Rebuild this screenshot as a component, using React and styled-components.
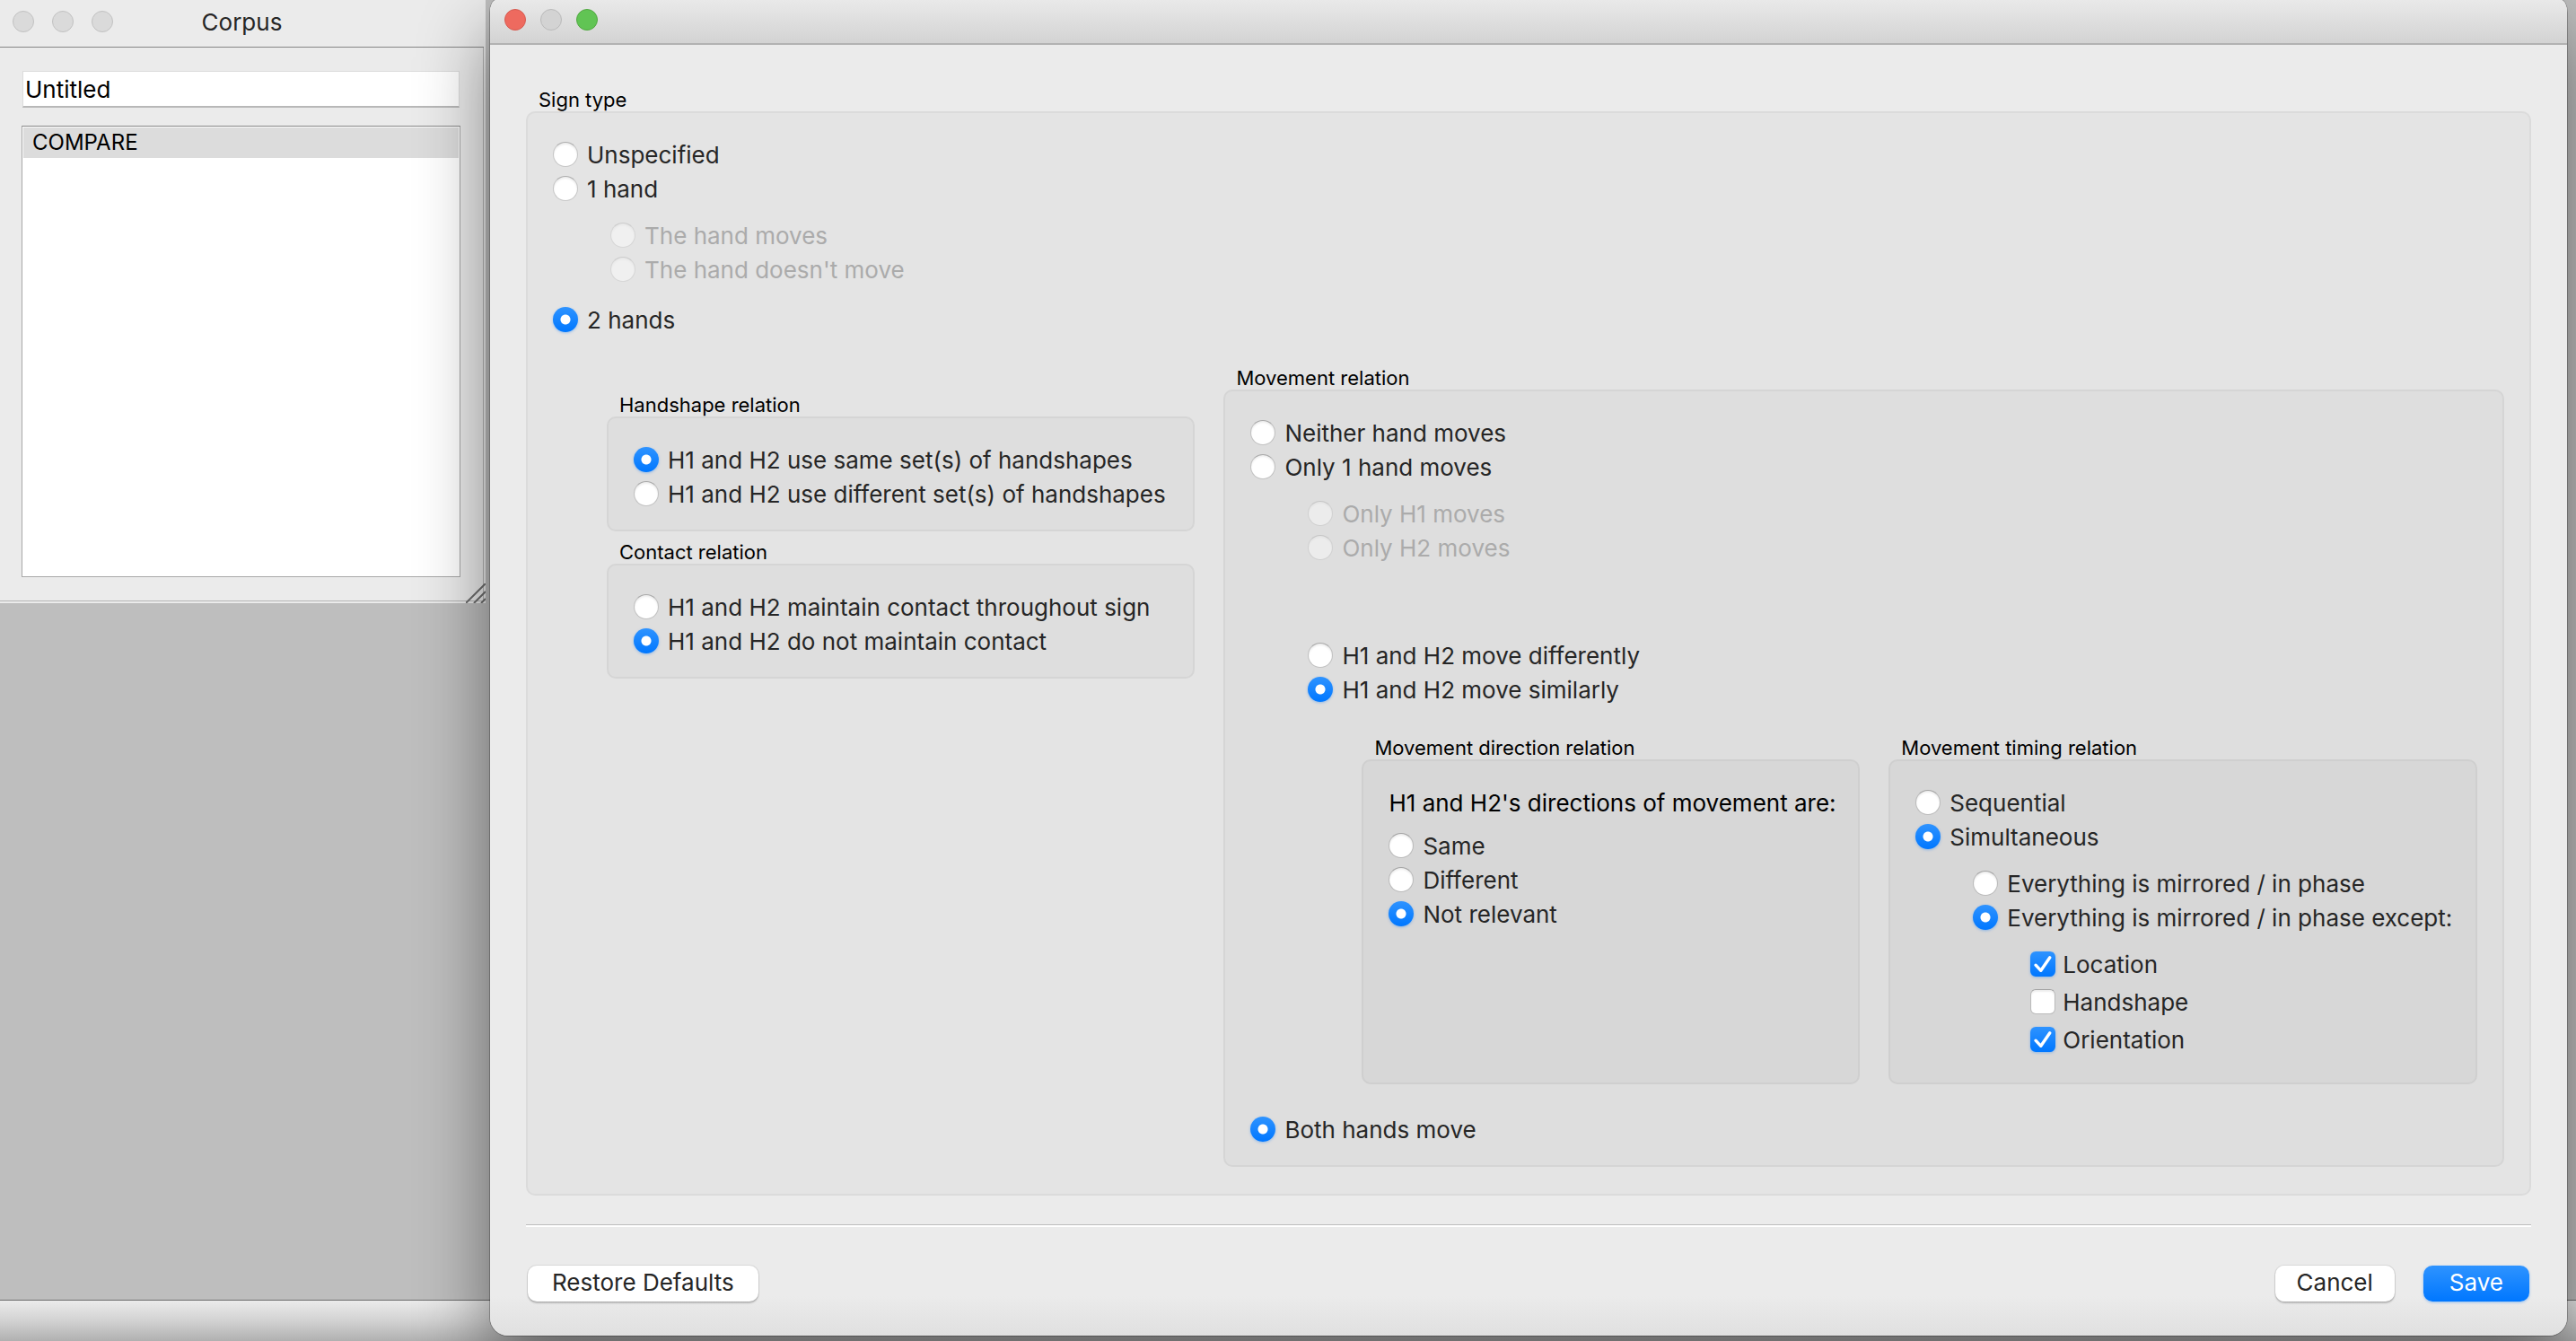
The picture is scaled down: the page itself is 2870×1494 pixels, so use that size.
import React, { useState } from "react";
import styled, { createGlobalStyle, css } from "styled-components";

const GlobalStyle = createGlobalStyle`
  *, *::before, *::after { box-sizing: border-box; }
  body {
    margin: 0;
    background: #bebebe;
    color: #262626;
    font-family: Inter, "Liberation Sans", sans-serif;
    font-size: 26px;
    line-height: 38px;
  }
  button, input { font: inherit; color: inherit; }
`;

const Desktop = styled.main`
  display: grid;
  grid-template-columns: 546px minmax(0, 1fr);
  min-height: 100vh;
  overflow: hidden;
`;

const MainWindow = styled.div`
  grid-area: 1 / 1 / 2 / 3;
  display: flex;
  flex-direction: column;
`;

const Workspace = styled.div`
  flex: 1;
  background: #bebebe;
`;

const StatusBar = styled.div`
  height: 46px;
  border-top: 1px solid #6c6c6c;
  background: linear-gradient(#ebebeb, #d2d2d2 50%, #b0b0b0);
`;

/* Corpus window */

const CorpusWindow = styled.section`
  grid-area: 1 / 1 / 2 / 2;
  position: relative;
  align-self: start;
  margin-right: 5px;
  padding: 0 2px 2px 0;
  background: #ebebeb;
`;

const CorpusTitleBar = styled.header`
  display: grid;
  grid-template-columns: 1fr auto 1fr;
  align-items: center;
  height: 53px;
  padding: 0 14px 4px;
  border-bottom: 1px solid #868686;
`;

const CorpusTitle = styled.h1`
  margin: 0;
  padding-top: 2px;
  font-size: 26px;
  font-weight: 400;
  line-height: 46px;
`;

const Lights = styled.div`
  display: flex;
  gap: ${(p) => p.$gap}px;
`;

const lightTones = {
  idle: ["#dadada", "#c2c2c2"],
  dim: ["#d3d3d3", "#bababa"],
  red: ["#ee6a5f", "#d65a50"],
  green: ["#61c454", "#52a842"],
};

const Light = styled.button`
  width: 24px;
  height: 24px;
  padding: 0;
  border: 1px solid ${(p) => lightTones[p.$tone][1]};
  border-radius: 50%;
  background: ${(p) => lightTones[p.$tone][0]};
`;

const CorpusBody = styled.div`
  display: flex;
  flex-direction: column;
  gap: 20px;
  padding: 26px 25px 26px 24px;
  border-right: 1px solid #b4b4b4;
  border-bottom: 1px solid #b4b4b4;
`;

const NameInput = styled.input`
  height: 41px;
  margin: 0 1px;
  padding: 0 2px;
  border: 1px solid #dcdcdc;
  border-bottom: 2px solid #b8b8b8;
  border-radius: 0;
  outline: none;
  background: #fff;
  color: #000;
`;

const GlossList = styled.ul`
  min-height: 503px;
  margin: 0;
  padding: 1px;
  list-style: none;
  border: 1px solid #a8a8a8;
  border-top-color: #868686;
  background: #fff;
`;

const GlossButton = styled.button`
  display: block;
  width: 100%;
  height: 34px;
  padding: 0 10px;
  border: 0;
  background: #dcdcdc;
  color: #000;
  font-size: 24px;
  line-height: 34px;
  text-align: left;
`;

const Grip = styled.svg`
  position: absolute;
  right: 0;
  bottom: 0;
  width: 22px;
  height: 22px;
`;

/* Dialog */

const Dialog = styled.section`
  grid-area: 1 / 2 / 2 / 3;
  position: relative;
  align-self: start;
  margin-right: 10px;
  border-radius: 7px 7px 20px 20px / 14px 14px 20px 20px;
  background: linear-gradient(to top, #e0e0e0, #ebebeb 44px);
  box-shadow:
    0 0 0 1px rgba(0, 0, 0, 0.25),
    0 36px 80px rgba(0, 0, 0, 0.47);
`;

const DialogTitleBar = styled.header`
  height: 50px;
  padding: 10px 16px;
  border-bottom: 2px solid #b2b2b2;
  border-radius: inherit;
  border-bottom-left-radius: 0;
  border-bottom-right-radius: 0;
  background: linear-gradient(#e9e9e9, #d3d3d3);
`;

const DialogBody = styled.form`
  padding: 44px 40px 38px;
`;

const Group = styled.fieldset`
  display: flex;
  flex-direction: column;
  min-width: 0;
  margin: 0;
  padding: 0;
  border: 0;
`;

const Legend = styled.legend`
  padding: 5px 14px 1px;
  color: #000;
  font-size: 22px;
  line-height: 24px;
  white-space: nowrap;
`;

const panelTones = [
  ["#e4e4e4", "#dbdbdb"],
  ["#dedede", "#d5d5d5"],
  ["#d7d7d7", "#cfcfcf"],
];

const Panel = styled.div`
  flex: 1;
  padding: 27px 28px 21px;
  border: 2px solid ${(p) => panelTones[p.$level][1]};
  border-radius: 10px;
  background: ${(p) => panelTones[p.$level][0]};
`;

const Sub = styled.div`
  margin-left: 64px;
  padding: ${(p) => p.$top || 14}px 0 4px;
`;

const Choices = styled.div`
  padding-top: ${(p) => p.$top || 0}px;
`;

const Columns = styled.div`
  display: grid;
  grid-template-columns: ${(p) => p.$template};
  gap: 32px;
  margin-left: 60px;
  padding: 29px 0 9px;
`;

const Stack = styled.div`
  display: flex;
  flex-direction: column;
  gap: 6px;
  padding-top: 30px;
`;

const Prompt = styled.p`
  margin: 0;
  padding: 1px 0 9px;
  color: #000;
  white-space: nowrap;
`;

const Option = styled.label`
  display: flex;
  align-items: center;
  gap: 10px;
  height: 38px;
  white-space: nowrap;
  color: ${(p) => (p.$disabled ? "#ababab" : "inherit")};
`;

const OptionText = styled.span`
  padding-top: 2px;
`;

const CheckOption = styled(Option)`
  gap: 8px;
  & + & { margin-top: 4px; }
`;

const checkable = css`
  appearance: none;
  flex: none;
  width: 28px;
  height: 28px;
  margin: 0;
  border: 1px solid rgba(0, 0, 0, 0.13);
  border-top-color: rgba(0, 0, 0, 0.24);
  background: #fff;
  background-clip: padding-box;
  box-shadow: inset 0 2px 2px rgba(0, 0, 0, 0.07);
`;

const RadioInput = styled.input.attrs({ type: "radio" })`
  ${checkable}
  border-radius: 50%;
  &:checked {
    border: 0;
    background:
      radial-gradient(circle, #fff 5px, rgba(255, 255, 255, 0) 6px),
      linear-gradient(#2e93ff, #0077ff);
    box-shadow: 0 1px 3px rgba(0, 120, 255, 0.35);
  }
  &:disabled { opacity: 0.45; }
`;

const CheckFrame = styled.span`
  display: grid;
  & > * { grid-area: 1 / 1; }
`;

const CheckInput = styled.input.attrs({ type: "checkbox" })`
  ${checkable}
  border-radius: 6px;
  &:checked {
    border: 0;
    background: linear-gradient(#2e93ff, #0077ff);
    box-shadow: 0 1px 3px rgba(0, 120, 255, 0.35);
  }
`;

const CheckMark = styled.svg`
  width: 28px;
  height: 28px;
  pointer-events: none;
`;

const Divider = styled.hr`
  height: 3px;
  margin: 32px 0 43px;
  border: 0;
  border-top: 1px solid #bdbdbd;
  background: #fff;
`;

const Footer = styled.footer`
  display: flex;
  gap: 32px;
  padding: 0 2px;
`;

const Spacer = styled.div`
  flex: 1;
`;

const PushButton = styled.button`
  height: 40px;
  padding: 0 ${(p) => p.$pad}px 2px;
  border: 0;
  border-radius: 10px;
  background: ${(p) => (p.$primary ? "linear-gradient(#2e93ff, #0077ff)" : "#fff")};
  color: ${(p) => (p.$primary ? "#fff" : "#262626")};
  line-height: 38px;
  box-shadow: ${(p) =>
    p.$primary
      ? "0 1px 3px rgba(0, 120, 255, 0.4)"
      : "0 0 0 1px rgba(0, 0, 0, 0.08), 0 2px 2px rgba(0, 0, 0, 0.2)"};
`;

function Radio({ group, label, disabled, value, onPick }) {
  return (
    <Option $disabled={disabled}>
      <RadioInput
        name={group}
        disabled={disabled}
        checked={value === label}
        onChange={() => onPick(group, label)}
      />
      <OptionText>{label}</OptionText>
    </Option>
  );
}

function Check({ label, initial }) {
  const [on, setOn] = useState(initial);
  return (
    <CheckOption>
      <CheckFrame>
        <CheckInput checked={on} onChange={() => setOn(!on)} />
        {on && (
          <CheckMark viewBox="0 0 28 28" aria-hidden="true">
            <path
              d="M6 15.2 L11.8 21.3 L21.8 6.8"
              fill="none"
              stroke="#fff"
              strokeWidth="3.4"
              strokeLinecap="round"
              strokeLinejoin="round"
            />
          </CheckMark>
        )}
      </CheckFrame>
      <OptionText>{label}</OptionText>
    </CheckOption>
  );
}

export default function App() {
  const [name, setName] = useState("Untitled");
  const [picks, setPicks] = useState({
    hands: "2 hands",
    handshape: "H1 and H2 use same set(s) of handshapes",
    contact: "H1 and H2 do not maintain contact",
    movement: "Both hands move",
    both: "H1 and H2 move similarly",
    direction: "Not relevant",
    timing: "Simultaneous",
    phase: "Everything is mirrored / in phase except:",
  });
  const pick = (group, label) => setPicks((all) => ({ ...all, [group]: label }));
  const radio = (group, label, disabled) => (
    <Radio group={group} label={label} disabled={disabled} value={picks[group]} onPick={pick} />
  );
  const oneHand = picks.hands === "1 hand";
  const onlyOne = picks.movement === "Only 1 hand moves";

  return (
    <>
      <GlobalStyle />
      <Desktop>
        <MainWindow>
          <Workspace />
          <StatusBar />
        </MainWindow>

        <CorpusWindow>
          <CorpusTitleBar>
            <Lights $gap={20}>
              <Light $tone="idle" aria-label="Close" />
              <Light $tone="idle" aria-label="Minimize" />
              <Light $tone="idle" aria-label="Zoom" />
            </Lights>
            <CorpusTitle>Corpus</CorpusTitle>
          </CorpusTitleBar>
          <CorpusBody>
            <NameInput
              aria-label="Corpus name"
              value={name}
              onChange={(e) => setName(e.target.value)}
            />
            <GlossList>
              <li>
                <GlossButton>COMPARE</GlossButton>
              </li>
            </GlossList>
          </CorpusBody>
          <Grip viewBox="0 0 22 22" aria-hidden="true">
            <path d="M0 22 L22 0 M9 22 L22 9 M17 22 L22 17" stroke="#6e6e6e" strokeWidth="2" />
          </Grip>
        </CorpusWindow>

        <Dialog role="dialog" aria-label="Sign type">
          <DialogTitleBar>
            <Lights $gap={16}>
              <Light $tone="red" aria-label="Close" />
              <Light $tone="dim" aria-label="Minimize" />
              <Light $tone="green" aria-label="Zoom" />
            </Lights>
          </DialogTitleBar>
          <DialogBody onSubmit={(e) => e.preventDefault()}>
            <Group>
              <Legend>Sign type</Legend>
              <Panel $level={0}>
                {radio("hands", "Unspecified")}
                {radio("hands", "1 hand")}
                <Sub>
                  {radio("handMoves", "The hand moves", !oneHand)}
                  {radio("handMoves", "The hand doesn't move", !oneHand)}
                </Sub>
                <Choices $top={14}>{radio("hands", "2 hands")}</Choices>
                <Columns $template="minmax(0, 17fr) minmax(0, 37fr)">
                  <Stack>
                    <Group>
                      <Legend>Handshape relation</Legend>
                      <Panel $level={1}>
                        {radio("handshape", "H1 and H2 use same set(s) of handshapes")}
                        {radio("handshape", "H1 and H2 use different set(s) of handshapes")}
                      </Panel>
                    </Group>
                    <Group>
                      <Legend>Contact relation</Legend>
                      <Panel $level={1}>
                        {radio("contact", "H1 and H2 maintain contact throughout sign")}
                        {radio("contact", "H1 and H2 do not maintain contact")}
                      </Panel>
                    </Group>
                  </Stack>
                  <Group>
                    <Legend>Movement relation</Legend>
                    <Panel $level={1}>
                      {radio("movement", "Neither hand moves")}
                      {radio("movement", "Only 1 hand moves")}
                      <Sub>
                        {radio("single", "Only H1 moves", !onlyOne)}
                        {radio("single", "Only H2 moves", !onlyOne)}
                      </Sub>
                      <Sub $top={78}>
                        {radio("both", "H1 and H2 move differently")}
                        {radio("both", "H1 and H2 move similarly")}
                        <Columns $template="minmax(0, 11fr) minmax(0, 13fr)">
                          <Group>
                            <Legend>Movement direction relation</Legend>
                            <Panel $level={2}>
                              <Prompt>H1 and H2's directions of movement are:</Prompt>
                              {radio("direction", "Same")}
                              {radio("direction", "Different")}
                              {radio("direction", "Not relevant")}
                            </Panel>
                          </Group>
                          <Group>
                            <Legend>Movement timing relation</Legend>
                            <Panel $level={2}>
                              {radio("timing", "Sequential")}
                              {radio("timing", "Simultaneous")}
                              <Sub>
                                {radio("phase", "Everything is mirrored / in phase")}
                                {radio("phase", "Everything is mirrored / in phase except:")}
                                <Sub>
                                  <Check label="Location" initial={true} />
                                  <Check label="Handshape" initial={false} />
                                  <Check label="Orientation" initial={true} />
                                </Sub>
                              </Sub>
                            </Panel>
                          </Group>
                        </Columns>
                      </Sub>
                      <Choices $top={18}>{radio("movement", "Both hands move")}</Choices>
                    </Panel>
                  </Group>
                </Columns>
              </Panel>
            </Group>
            <Divider />
            <Footer>
              <PushButton type="button" $pad={27}>Restore Defaults</PushButton>
              <Spacer />
              <PushButton type="button" $pad={24}>Cancel</PushButton>
              <PushButton type="submit" $primary $pad={29}>Save</PushButton>
            </Footer>
          </DialogBody>
        </Dialog>
      </Desktop>
    </>
  );
}
